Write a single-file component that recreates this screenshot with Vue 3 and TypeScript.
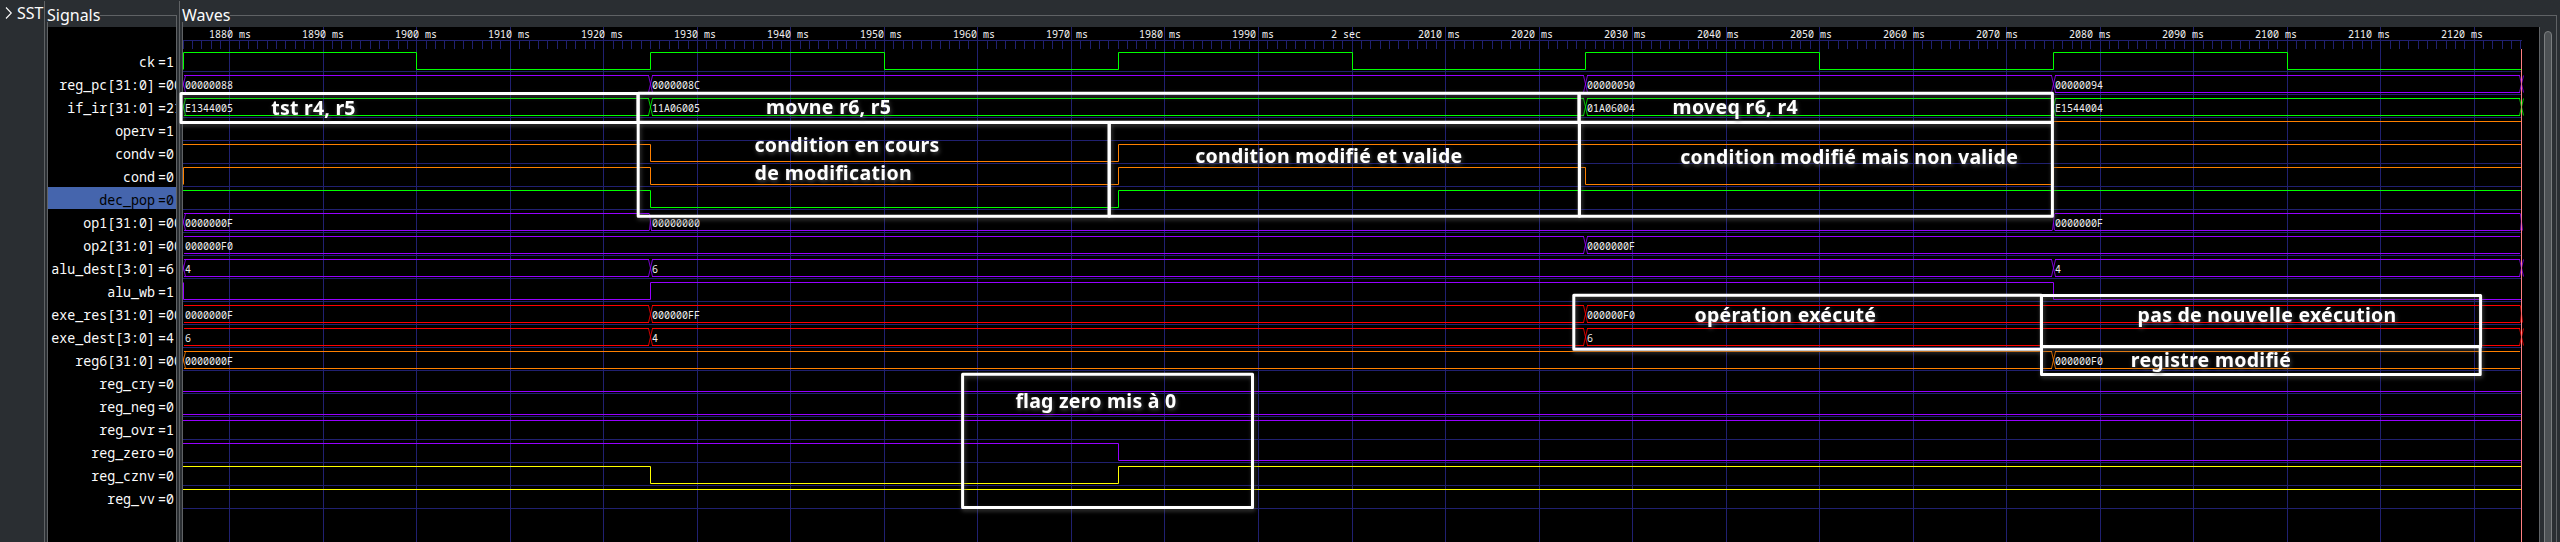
<script setup lang="ts">
type Step = [time: number, value: string]

interface Signal {
  name: string
  value: string
  color: string
  kind: 'bit' | 'bus'
  steps: Step[]
  /** the signal changes exactly at the left edge of the view */
  startEdge?: boolean
  /** what a bus turns into at the end of the trace */
  endEdge?: 'cross' | 'zero'
  selected?: boolean
}

interface Frame { x: number; y: number; right: number; bottom: number }
interface Note { text: string; x: number; y: number; width: number }

const GREEN = '#00ff00'
const PURPLE = '#9600ff'
const ORANGE = '#ff8000'
const RED = '#ff0000'
const YELLOW = '#ffff00'

const signals: Signal[] = [
  { name: 'ck', value: '=1', color: GREEN, kind: 'bit', startEdge: true, steps: [[1875, '1'], [1900, '0'], [1925, '1'], [1950, '0'], [1975, '1'], [2000, '0'], [2025, '1'], [2050, '0'], [2075, '1'], [2100, '0']] },
  { name: 'reg_pc[31:0]', value: '=00', color: PURPLE, kind: 'bus', startEdge: true, endEdge: 'cross', steps: [[1875, '00000088'], [1925, '0000008C'], [2025, '00000090'], [2075, '00000094']] },
  { name: 'if_ir[31:0]', value: '=21', color: GREEN, kind: 'bus', startEdge: true, endEdge: 'cross', steps: [[1875, 'E1344005'], [1925, '11A06005'], [2025, '01A06004'], [2075, 'E1544004']] },
  { name: 'operv', value: '=1', color: ORANGE, kind: 'bit', steps: [[1875, '1']] },
  { name: 'condv', value: '=0', color: ORANGE, kind: 'bit', steps: [[1875, '1'], [1925, '0'], [1975, '1']] },
  { name: 'cond', value: '=0', color: ORANGE, kind: 'bit', startEdge: true, steps: [[1875, '1'], [1925, '0'], [1975, '1'], [2025, '0'], [2075, '1']] },
  { name: 'dec_pop', value: '=0', color: GREEN, kind: 'bit', selected: true, steps: [[1875, '1'], [1925, '0'], [1975, '1']] },
  { name: 'op1[31:0]', value: '=00', color: PURPLE, kind: 'bus', startEdge: true, endEdge: 'zero', steps: [[1875, '0000000F'], [1925, '00000000'], [2075, '0000000F']] },
  { name: 'op2[31:0]', value: '=00', color: PURPLE, kind: 'bus', steps: [[1875, '000000F0'], [2025, '0000000F']] },
  { name: 'alu_dest[3:0]', value: '=6', color: PURPLE, kind: 'bus', startEdge: true, endEdge: 'cross', steps: [[1875, '4'], [1925, '6'], [2075, '4']] },
  { name: 'alu_wb', value: '=1', color: PURPLE, kind: 'bit', startEdge: true, steps: [[1875, '0'], [1925, '1'], [2075, '0']] },
  { name: 'exe_res[31:0]', value: '=00', color: RED, kind: 'bus', endEdge: 'zero', steps: [[1875, '0000000F'], [1925, '000000FF'], [2025, '000000F0']] },
  { name: 'exe_dest[3:0]', value: '=4', color: RED, kind: 'bus', endEdge: 'cross', steps: [[1875, '6'], [1925, '4'], [2025, '6']] },
  { name: 'reg6[31:0]', value: '=00', color: ORANGE, kind: 'bus', startEdge: true, steps: [[1875, '0000000F'], [2075, '000000F0']] },
  { name: 'reg_cry', value: '=0', color: PURPLE, kind: 'bit', steps: [[1875, '0']] },
  { name: 'reg_neg', value: '=0', color: PURPLE, kind: 'bit', steps: [[1875, '0']] },
  { name: 'reg_ovr', value: '=1', color: PURPLE, kind: 'bit', steps: [[1875, '1']] },
  { name: 'reg_zero', value: '=0', color: PURPLE, kind: 'bit', steps: [[1875, '1'], [1975, '0']] },
  { name: 'reg_cznv', value: '=0', color: YELLOW, kind: 'bit', steps: [[1875, '1'], [1925, '0'], [1975, '1']] },
  { name: 'reg_vv', value: '=0', color: YELLOW, kind: 'bit', steps: [[1875, '1']] },
]

const START = 1875
const END = 2125
const PITCH = 23
const CHAR = 6
const xOf = (t: number): number => Math.floor(183 + (t - START) * 9.352) + 0.5
const highY = (row: number): number => 52.5 + PITCH * row
const lowY = (row: number): number => 69.5 + PITCH * row
const endX = xOf(END)

const majors = Array.from({ length: 25 }, (_, i) => 1880 + i * 10)
const labels = majors.map((t, i) => {
  const text = t === 2000 ? '2 sec' : `${t} ms`
  return { text, x: 230.1 + i * 93 - (text.length * CHAR) / 2 }
})
const gridPath = majors.map(t => `M${xOf(t)} 27V542`).join('')
const rowPath = signals.map((_, r) => `M183 ${71.5 + PITCH * r}H${endX}`).join('')
const tickPath = Array.from({ length: END - START + 1 }, (_, i) => START + i)
  .filter(t => t % 10 !== 0)
  .map(t => `M${t === END ? endX - 1 : xOf(t)} 41V49`)
  .join('')

const isZero = (v: string): boolean => /^0+$/.test(v)

function bitPath(s: Signal, row: number): string {
  const level = (v: string) => (v === '1' ? highY(row) : lowY(row))
  let d = ''
  s.steps.forEach(([t, v], i) => {
    const x = xOf(t)
    if (i === 0) {
      d += s.startEdge ? `M${x} ${v === '1' ? lowY(row) : highY(row)}V${level(v)}` : `M183 ${level(v)}`
    } else {
      d += `H${x}V${level(v)}`
    }
  })
  return `${d}H${endX}`
}

function busFlatPath(s: Signal, row: number): string {
  let d = ''
  s.steps.forEach(([t, v], i) => {
    const from = i === 0 ? 184 : xOf(t) + (isZero(v) ? 0.5 : 1.5)
    const next = s.steps[i + 1]
    const to = next ? xOf(next[0]) - 1.5 : endX - 1.5
    d += `M${from} ${lowY(row)}H${to}`
    if (!isZero(v)) d += `M${from} ${highY(row)}H${to}`
  })
  return d
}

function busEdgePath(s: Signal, row: number): string {
  const top = highY(row)
  const bottom = lowY(row)
  const cross = (x: number) => `M${x - 2} ${top}L${x + 2} ${bottom}M${x - 2} ${bottom}L${x + 2} ${top}`
  const fall = (x: number) => `M${x - 1} ${top}L${x + 1} ${bottom}M${x - 1} ${bottom}L${x} ${top + 7}`
  const rise = (x: number) => `M${x - 1} ${bottom}L${x + 1} ${top}M${x} ${top + 9}L${x + 1} ${bottom}`
  let d = s.startEdge ? cross(xOf(START)) : ''
  s.steps.slice(1).forEach(([t, v], i) => {
    const x = xOf(t)
    d += isZero(v) ? fall(x) : isZero(s.steps[i][1]) ? rise(x) : cross(x)
  })
  if (s.endEdge === 'cross') d += cross(endX)
  if (s.endEdge === 'zero') d += fall(endX)
  return d
}

const frames: Frame[] = [
  { x: 181, y: 93.5, right: 638, bottom: 122.5 },
  { x: 638.2, y: 93.2, right: 1579, bottom: 122.3 },
  { x: 1579.2, y: 93.2, right: 2052.4, bottom: 122.3 },
  { x: 638.2, y: 122.6, right: 1109.2, bottom: 216.3 },
  { x: 1109.2, y: 122.6, right: 1579.4, bottom: 216.3 },
  { x: 1579.4, y: 122.6, right: 2052.4, bottom: 216.3 },
  { x: 1573.8, y: 295.2, right: 2041.4, bottom: 349.2 },
  { x: 2041.5, y: 295.4, right: 2480.6, bottom: 346.6 },
  { x: 2041.5, y: 346.8, right: 2480.2, bottom: 374.4 },
  { x: 962.6, y: 374.2, right: 1252.5, bottom: 507.6 },
]

const notes: Note[] = [
  { text: 'tst r4, r5', x: 271.2, y: 114.5, width: 84.3 },
  { text: 'movne r6, r5', x: 766, y: 114, width: 125 },
  { text: 'moveq r6, r4', x: 1672.6, y: 114, width: 125 },
  { text: 'condition en cours', x: 754.4, y: 152, width: 185 },
  { text: 'de modification', x: 754.6, y: 180, width: 157 },
  { text: 'condition modifié et valide', x: 1195.2, y: 162.7, width: 267 },
  { text: 'condition modifié mais non valide', x: 1680.2, y: 164, width: 337.6 },
  { text: 'opération exécuté', x: 1694.4, y: 322, width: 181.6 },
  { text: 'pas de nouvelle exécution', x: 2137.6, y: 321.7, width: 258.6 },
  { text: 'registre modifié', x: 2130.8, y: 366.8, width: 160 },
  { text: 'flag zero mis à 0', x: 1015.4, y: 407.7, width: 160.8 },
]
</script>

<template>
  <div class="viewer">
    <aside class="sst">
      <svg class="chevron" width="8" height="14" viewBox="0 0 8 14"><path d="M1 1.5L6.3 7L1 12.5" /></svg>
      <span>SST</span>
    </aside>

    <section class="panel signals">
      <header><span>Signals</span><i class="rule"></i></header>
      <div class="body list">
        <div v-for="s in signals" :key="s.name" class="row" :class="{ selected: s.selected }">
          <span class="name">{{ s.name }}</span>
          <span class="value">{{ s.value }}</span>
        </div>
      </div>
    </section>

    <div class="divider"></div>

    <section class="panel waves">
      <header><span>Waves</span><i class="rule"></i></header>
      <div class="body wavebody">
        <svg class="canvas" width="2356" height="515" viewBox="183 27 2356 515">
          <g class="grid">
            <path :d="gridPath" />
            <path :d="rowPath" />
            <path :d="tickPath" />
            <path :d="`M183 40.5H${endX + 0.5}`" />
          </g>
          <g class="tiny">
            <text
              v-for="l in labels" :key="l.text" :x="l.x" y="38"
              :textLength="l.text.length * CHAR" lengthAdjust="spacingAndGlyphs"
            >{{ l.text }}</text>
          </g>
          <path class="marker" :d="`M${endX} 49V542`" />
          <g v-for="(s, r) in signals" :key="s.name" fill="none" :stroke="s.color">
            <path v-if="s.kind === 'bit'" :d="bitPath(s, r)" />
            <template v-else>
              <path :d="busFlatPath(s, r)" />
              <path :d="busEdgePath(s, r)" stroke-opacity="0.8" />
              <g class="tiny">
                <text
                  v-for="st in s.steps" :key="st[0]" :x="xOf(st[0]) + 1.5" :y="66 + PITCH * r"
                  :textLength="st[1].length * CHAR" lengthAdjust="spacingAndGlyphs"
                >{{ st[1] }}</text>
              </g>
            </template>
          </g>
          <path class="marker over" :d="`M${endX} 49V542`" />
        </svg>
        <div class="track"><div class="thumb"></div></div>
      </div>
    </section>

    <svg class="overlay" width="2560" height="542" viewBox="0 0 2560 542">
      <g class="frames">
        <rect
          v-for="(f, i) in frames" :key="i"
          :x="f.x" :y="f.y" :width="f.right - f.x" :height="f.bottom - f.y"
        />
      </g>
      <g class="notes">
        <text v-for="n in notes" :key="n.text" :x="n.x" :y="n.y" :textLength="n.width">{{ n.text }}</text>
      </g>
    </svg>
  </div>
</template>

<style>
html, body { margin: 0; background: #2a2e32; overflow: hidden; }
</style>

<style scoped>
.viewer {
  position: relative;
  display: flex;
  width: 2560px;
  height: 542px;
  box-sizing: border-box;
  overflow: hidden;
  background: #2a2e32;
  color: #fcfcfc;
  font: 16px/22px "Noto Sans", "Open Sans", sans-serif;
}
.sst {
  display: flex;
  width: 44px;
  height: 541px;
  margin-top: 1px;
  margin-right: 2px;
  border-right: 1px solid #5f6265;
  box-sizing: content-box;
  white-space: nowrap;
}
.sst span { margin: 1px 0 0 4px; }
.chevron { margin: 5px 0 0 5px; flex: none; width: 8px; }
.chevron path { fill: none; stroke: #fcfcfc; stroke-width: 1.1; }
.panel { display: flex; flex-direction: column; }
.panel header { position: relative; display: flex; height: 27px; }
.panel header::before {
  content: "";
  position: absolute;
  left: 0;
  bottom: 0;
  width: 1px;
  height: 5px;
  background: #5f6265;
}
.panel header span { margin-top: 4px; }
.rule {
  flex: 1;
  margin-top: 15px;
  border-top: 1px solid #5f6265;
  border-right: 1px solid #5f6265;
}
.body {
  height: 515px;
  box-sizing: border-box;
  border-left: 1px solid #5f6265;
  border-right: 1px solid #5f6265;
}
.signals { width: 130px; }
.list {
  padding-top: 22px;
  background: #000;
  overflow: hidden;
  font: 14px/22px "Noto Sans Mono", "DejaVu Sans Mono", monospace;
}
.row {
  display: flex;
  gap: 3px;
  height: 22px;
  margin-bottom: 1px;
  white-space: nowrap;
  overflow: hidden;
}
.name {
  flex: none;
  width: 107px;
  display: flex;
  justify-content: flex-end;
  transform: translateY(2px) scaleX(0.949);
  transform-origin: right;
}
.value {
  flex: none;
  transform: translateY(2px) scaleX(0.949);
  transform-origin: left;
}
.row.selected { background: #4565ad; color: #000; }
.divider { width: 1px; height: 541px; margin: 1px 2px 0; border: 0; background: #5f6265; }
.waves { width: 2375px; }
.wavebody { display: flex; }
.canvas { display: block; flex: none; background: #000; }
.grid path { fill: none; stroke: #202070; }
.tiny {
  fill: #f0f0f0;
  stroke: none;
  font: 11px "Noto Sans Mono", "DejaVu Sans Mono", monospace;
  white-space: pre;
}
.marker { stroke: #ff8080; fill: none; }
.marker.over { stroke-opacity: 0.75; }
.track {
  flex: 1;
  border-left: 1px solid #5f6265;
  overflow: hidden;
}
.thumb {
  width: 8px;
  height: 530px;
  margin: 4px 0 0 4px;
  box-sizing: border-box;
  border: 1px solid #7b7e80;
  border-radius: 4px;
  background: #4d5154;
}
.overlay { position: absolute; left: 0; top: 0; }
.frames {
  fill: none;
  stroke: #fff;
  stroke-width: 3;
  stroke-linejoin: round;
  filter: drop-shadow(1px 2px 2px rgba(90, 90, 90, 0.75));
}
.notes {
  fill: #fff;
  font: bold 19.5px "Noto Sans", "Open Sans", sans-serif;
  filter: drop-shadow(1px 2px 2px rgba(90, 90, 90, 0.8));
}
</style>
